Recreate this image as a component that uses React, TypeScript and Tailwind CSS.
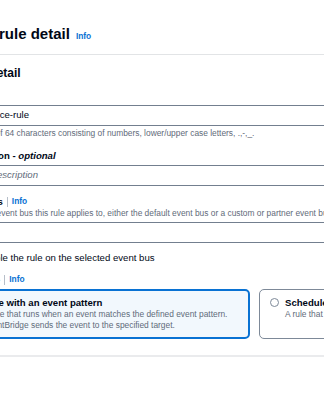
import React from 'react';

const InfoLink: React.FC = () => (
  <span className="text-[8.4px] font-bold text-[#0972d3] leading-[11px]">Info</span>
);

const Radio: React.FC<{ checked?: boolean }> = ({ checked }) => (
  <span
    className={`inline-block w-[9px] h-[9px] rounded-full shrink-0 ${
      checked ? 'border-[3px] border-[#0972d3] bg-white' : 'border border-[#7d8998] bg-white'
    }`}
  />
);

export default function App() {
  return (
    <div
      className="w-[324px] h-[400px] overflow-hidden bg-white text-[#000716]"
      style={{ fontFamily: '"Liberation Sans", Arial, sans-serif' }}
    >
      <div className="ml-[-53px] w-[820px] pt-[24px]">
        {/* Page header */}
        <div className="flex items-baseline gap-[6px] h-[20px] pl-[2px]">
          <h1 className="text-[15px] font-bold leading-[20px]">Define rule detail</h1>
          <InfoLink />
        </div>

        {/* Container */}
        <div className="mt-[10px] border-t border-[#e2e4e6] border-b-2 border-b-[#eaebed] px-[10px] pt-[10px] pb-[16px]">
          <h2 className="pl-[3px] text-[12px] font-bold leading-[16px]">Rule detail</h2>

          {/* Name */}
          <div className="mt-[7px]">
            <div className="text-[9.6px] font-bold leading-[13px]">Name</div>
            <div className="mt-[4px] h-[21px] border border-[#737f8f] rounded-[5px] px-[7px] flex items-center text-[9.6px]">
              my-source-rule
            </div>
            <div className="mt-[1.5px] text-[8.4px] leading-[11px] text-[#5f6b7a]">
              Maximum of 64 characters consisting of numbers, lower/upper case letters, .,-,_.
            </div>
          </div>

          {/* Description */}
          <div className="mt-[10px]">
            <div className="text-[9.6px] font-bold leading-[13px]">
              Description - <i>optional</i>
            </div>
            <div className="mt-[3.5px] h-[21px] border border-[#737f8f] rounded-[5px] px-[8px] flex items-center text-[9.6px] italic text-[#5f6b7a]">
              Enter description
            </div>
          </div>

          {/* Event bus */}
          <div className="mt-[9px]">
            <div className="flex items-center h-[13px]">
              <span className="text-[9.6px] font-bold leading-[13px]">Event bus</span>
              <span className="mx-[4px] w-px h-[10px] bg-[#b6bec9]" />
              <InfoLink />
            </div>
            <div className="text-[8.4px] leading-[11px] text-[#5f6b7a]">
              Select the event bus this rule applies to, either the default event bus or a custom or partner event bus.
            </div>
            <div className="mt-[2.5px] h-[21px] border border-[#737f8f] rounded-[5px] px-[8px] flex items-center text-[9.6px]">
              default
            </div>
          </div>

          {/* Toggle */}
          <div className="mt-[8.5px] flex items-center gap-[5px] h-[13px]">
            <span className="relative inline-block w-[16px] h-[9px] rounded-full bg-[#0972d3] shrink-0">
              <span className="absolute right-[1.5px] top-[1.5px] w-[6px] h-[6px] rounded-full bg-white" />
            </span>
            <span className="text-[9.6px] leading-[13px]">Enable the rule on the selected event bus</span>
          </div>

          {/* Rule type */}
          <div className="mt-[9px]">
            <div className="flex items-center h-[13px]">
              <span className="text-[9.6px] font-bold leading-[13px]">Rule type</span>
              <span className="mx-[4px] w-px h-[10px] bg-[#b6bec9]" />
              <InfoLink />
            </div>
            <div className="mt-[3px] grid grid-cols-[293px_293px] gap-[9px]">
              <div className="border-2 border-[#0972d3] bg-[#f2f8fd] rounded-[5px] px-[9px] pt-[5px] pb-[7px]">
                <div className="flex items-center gap-[6px] h-[13px]">
                  <Radio checked />
                  <span className="text-[9.6px] font-bold leading-[13px]">Rule with an event pattern</span>
                </div>
                <div className="pl-[15px] text-[8.4px] leading-[10.5px] text-[#5f6b7a]">
                  A rule that runs when an event matches the defined event pattern. EventBridge sends the event to the specified target.
                </div>
              </div>
              <div className="border border-[#7d8998] bg-white rounded-[5px] px-[10px] pt-[6px] pb-[8px]">
                <div className="flex items-center gap-[6px] h-[13px]">
                  <Radio />
                  <span className="text-[9.6px] font-bold leading-[13px]">Schedule</span>
                </div>
                <div className="pl-[15px] text-[8.4px] leading-[10.5px] text-[#5f6b7a]">
                  A rule that runs on a schedule
                </div>
              </div>
            </div>
          </div>
        </div>
      </div>
    </div>
  );
}
